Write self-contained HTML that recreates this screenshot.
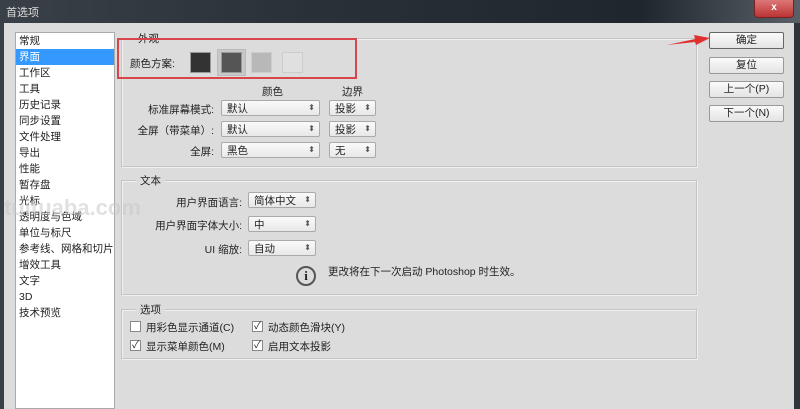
<!DOCTYPE html><html><head><meta charset="utf-8"><style>
*{margin:0;padding:0;box-sizing:border-box}
body{width:800px;height:409px;overflow:hidden;background:#dcdcdc;font-family:"Liberation Sans","Noto Sans CJK SC",sans-serif;font-size:10.5px;color:#222;position:relative}
.a{position:absolute}
.title{left:0;top:0;width:800px;height:23px;background:linear-gradient(90deg,#3a4048,#2a3038 40%,#1f262e 80%,#5a6068);color:#ddd;font-size:11px;padding:4px 0 0 6px}
.close{left:754px;top:0;width:40px;height:18px;background:linear-gradient(#d77,#b33);border:1px solid #722;border-top:none;border-radius:0 0 4px 4px;color:#fff;font-size:10px;text-align:center;line-height:16px;font-weight:bold}
.lb{left:0;top:23px;width:4px;height:386px;background:#3a4048}
.rb{left:794px;top:23px;width:6px;height:386px;background:#2e343a}
.list{left:15px;top:32px;width:100px;height:377px;background:#fff;border:1px solid #aaa}
.list div{height:16px;line-height:16px;padding-left:3px;font-size:10.5px}
.sel{background:#3399ff;color:#fff}
.grp{border:1px solid #c4c4c4;box-shadow:1px 1px 0 #f0f0f0 inset,1px 1px 0 #f0f0f0}
.lg{background:#dcdcdc;padding:0 4px;font-size:10.5px}
.sw{width:21px;height:21px;border:1px solid #999}
.dd{height:16px;background:linear-gradient(#fafafa,#e8e8e8);border:1px solid #aaa;border-radius:2px;font-size:10.5px;padding-left:5px;display:flex;align-items:center}
.dd:after{content:"⬍";position:absolute;right:4px;top:2px;font-size:8px;color:#555}
.r{text-align:right}
.btn{left:709px;width:75px;height:17px;background:linear-gradient(#fafafa,#e4e4e4);border:1px solid #999;border-radius:2px;text-align:center;line-height:15px;font-size:10.5px}
.cb{width:11px;height:11px;border:1px solid #888;background:#fff;font-size:10px;line-height:9px;text-align:center}
</style></head><body>
<div class="a title">首选项</div>
<div class="a close">x</div>
<div class="a lb"></div><div class="a rb"></div>
<div class="a list">
<div>常规</div><div class="sel">界面</div><div>工作区</div><div>工具</div><div>历史记录</div><div>同步设置</div><div>文件处理</div><div>导出</div><div>性能</div><div>暂存盘</div><div>光标</div><div>透明度与色域</div><div>单位与标尺</div><div>参考线、网格和切片</div><div>增效工具</div><div>文字</div><div>3D</div><div>技术预览</div>
</div>
<div class="a" style="left:4px;top:195px;font-size:22px;font-weight:bold;color:rgba(200,200,200,.55)">tuituaba.com</div>
<div class="a grp" style="left:121px;top:38px;width:576px;height:129px"></div>
<div class="a lg" style="left:134px;top:31px">外观</div>
<div class="a" style="left:117px;top:38px;width:240px;height:41px;border:2px solid #d9454a"></div>
<div class="a" style="left:130px;top:56px">颜色方案:</div>
<div class="a sw" style="left:190px;top:52px;background:#333"></div>
<div class="a" style="left:217px;top:49px;width:29px;height:27px;background:#c8c8c8;border:1px solid #bbb"></div>
<div class="a sw" style="left:221px;top:52px;background:#555"></div>
<div class="a sw" style="left:251px;top:52px;background:#b8b8b8;border-color:#ccc"></div>
<div class="a sw" style="left:282px;top:52px;background:#e0e0e0;border-color:#ccc"></div>
<div class="a" style="left:262px;top:84px">颜色</div>
<div class="a" style="left:342px;top:84px">边界</div>
<div class="a r" style="left:120px;width:94px;top:102px">标准屏幕模式:</div>
<div class="a dd" style="left:221px;top:100px;width:99px">默认</div>
<div class="a dd" style="left:329px;top:100px;width:47px">投影</div>
<div class="a r" style="left:120px;width:94px;top:123px">全屏（带菜单）:</div>
<div class="a dd" style="left:221px;top:121px;width:99px">默认</div>
<div class="a dd" style="left:329px;top:121px;width:47px">投影</div>
<div class="a r" style="left:120px;width:94px;top:144px">全屏:</div>
<div class="a dd" style="left:221px;top:142px;width:99px">黑色</div>
<div class="a dd" style="left:329px;top:142px;width:47px">无</div>
<div class="a grp" style="left:121px;top:180px;width:576px;height:115px"></div>
<div class="a lg" style="left:136px;top:173px">文本</div>
<div class="a r" style="left:130px;width:112px;top:195px">用户界面语言:</div>
<div class="a dd" style="left:248px;top:192px;width:68px">简体中文</div>
<div class="a r" style="left:130px;width:112px;top:218px">用户界面字体大小:</div>
<div class="a dd" style="left:248px;top:216px;width:68px">中</div>
<div class="a r" style="left:130px;width:112px;top:242px">UI 缩放:</div>
<div class="a dd" style="left:248px;top:240px;width:68px">自动</div>
<div class="a" style="left:296px;top:266px;width:20px;height:20px;border:2px solid #555;border-radius:50%;text-align:center;font:bold 13px 'Liberation Serif',serif;line-height:16px">i</div>
<div class="a" style="left:328px;top:264px">更改将在下一次启动 Photoshop 时生效。</div>
<div class="a grp" style="left:121px;top:309px;width:576px;height:50px"></div>
<div class="a lg" style="left:136px;top:302px">选项</div>
<div class="a cb" style="left:130px;top:321px"></div>
<div class="a" style="left:146px;top:320px">用彩色显示通道(C)</div>
<div class="a cb" style="left:252px;top:321px">✓</div>
<div class="a" style="left:268px;top:320px">动态颜色滑块(Y)</div>
<div class="a cb" style="left:130px;top:340px">✓</div>
<div class="a" style="left:146px;top:339px">显示菜单颜色(M)</div>
<div class="a cb" style="left:252px;top:340px">✓</div>
<div class="a" style="left:268px;top:339px">启用文本投影</div>
<div class="a btn" style="top:32px;border-color:#666">确定</div>
<div class="a btn" style="top:57px">复位</div>
<div class="a btn" style="top:81px">上一个(P)</div>
<div class="a btn" style="top:105px">下一个(N)</div>
<svg class="a" style="left:665px;top:32px" width="46" height="16"><path d="M2 13 L30 7 L29 3 L45 6 L31 13 L30 10 Z" fill="#e03030"/></svg>
</body></html>
